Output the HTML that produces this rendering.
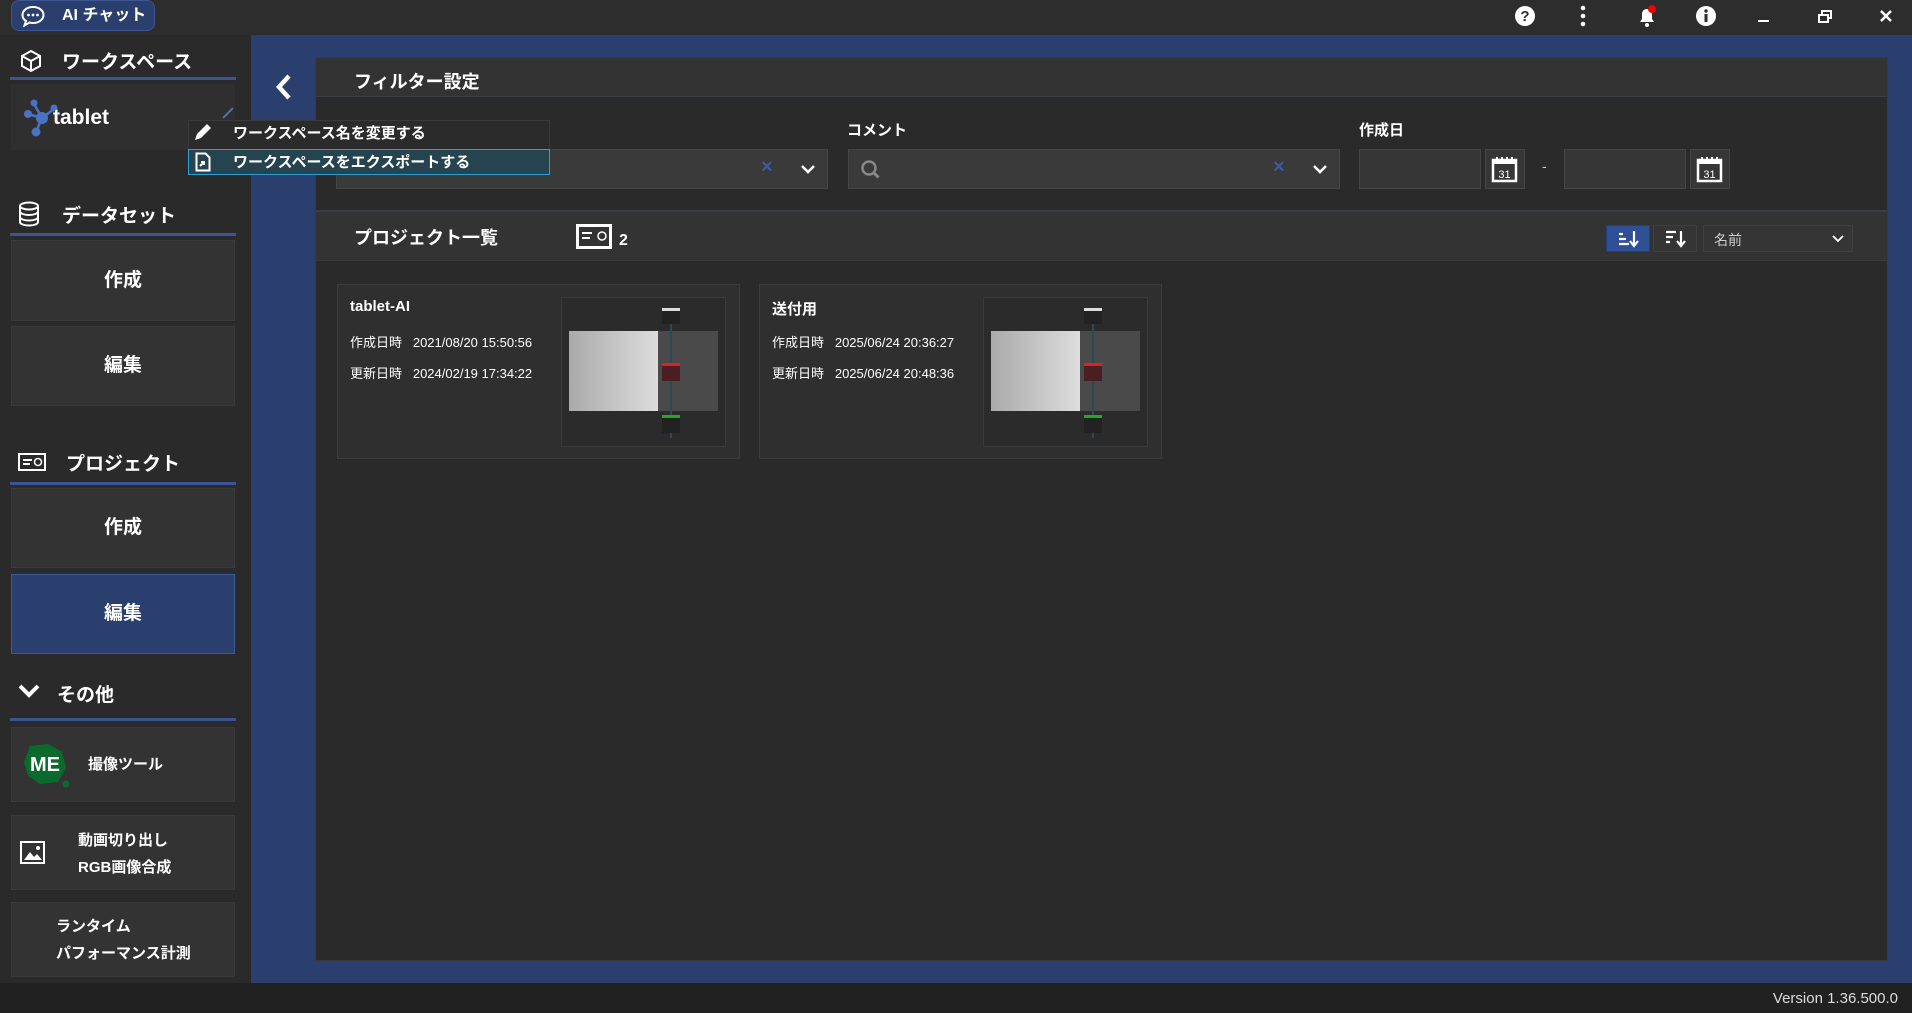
<!DOCTYPE html>
<html><head><meta charset="utf-8"><style>
*{box-sizing:border-box;margin:0;padding:0}
body{width:1912px;height:1013px;background:#2a2a2a;font-family:"Liberation Sans","Noto Sans CJK JP",sans-serif;color:#fff;position:relative;overflow:hidden}
.a{position:absolute}
.top{left:0;top:0;width:1912px;height:35px;background:#2d2d2d}
.chat{left:11px;top:0;width:144px;height:31px;background:#2b3f6e;border:1px solid #3d5590;border-radius:8px;font-size:16px;font-weight:bold;line-height:29px;padding-left:50px}
.side{left:0;top:35px;width:251px;height:948px;background:#2a2a2a}
.blue{left:251px;top:35px;width:1661px;height:948px;background:#2a3f6e}
.bot{left:0;top:983px;width:1912px;height:30px;background:#212121;font-size:15px;color:#ddd}
.hd{font-size:19px;font-weight:bold;left:62px}
.ul{left:10px;width:226px;height:3px;background:#3a5494}
.btn{left:11px;width:224px;background:#333;border:1px solid #3a3a3a;font-size:19px;font-weight:bold;text-align:center}
.panel{left:315px;top:57px;width:1573px;height:904px;background:#2a2a2a;border:1px solid #3a3a3a}
.ph{background:#333;height:39px;border-bottom:1px solid #3a3d4a;font-size:18px;font-weight:bold}
.inp{background:#3a3a3a;border:1px solid #454545}
.lbl{font-size:15px;font-weight:bold}
.card{background:#2f2f2f;border:1px solid #3c3c3c;width:403px;height:175px}
.card .t{left:12px;top:13px;font-size:15px;font-weight:bold}
.card .d{left:12px;font-size:13px}
.thumb{left:223px;top:12px;width:165px;height:150px;border:1px solid #3a3a3a;background:#2b2b2b}
</style></head><body>
<div class="a top"></div>
<div class="a chat"><svg class="a" style="left:8px;top:4px" width="26" height="22" viewBox="0 0 26 22"><path d="M13 2C7 2 2.5 5.5 2.5 10c0 2.5 1.3 4.6 3.5 6l-1.5 4.5 5-3c1.1.3 2.2.5 3.5.5 6 0 10.5-3.5 10.5-8S19 2 13 2z" fill="none" stroke="#fff" stroke-width="2"/><circle cx="8.5" cy="10" r="1.4" fill="#fff"/><circle cx="13" cy="10" r="1.4" fill="#fff"/><circle cx="17.5" cy="10" r="1.4" fill="#fff"/></svg>AI チャット</div>
<svg class="a" style="left:1514px;top:5px" width="22" height="22"><circle cx="11" cy="11" r="10" fill="#fff"/><text x="11" y="16" font-size="15" font-weight="bold" text-anchor="middle" fill="#2d2d2d" font-family="Liberation Sans">?</text></svg>
<svg class="a" style="left:1578px;top:5px" width="10" height="22"><circle cx="5" cy="3" r="2.3" fill="#fff"/><circle cx="5" cy="11" r="2.3" fill="#fff"/><circle cx="5" cy="19" r="2.3" fill="#fff"/></svg>
<svg class="a" style="left:1636px;top:4px" width="24" height="24"><path d="M4 18h14l-2-3V10c0-3-2-5-5-5s-5 2-5 5v5z" fill="#fff"/><circle cx="11" cy="21" r="2" fill="#fff"/><circle cx="16" cy="5" r="4" fill="#e00"/></svg>
<svg class="a" style="left:1695px;top:5px" width="22" height="22"><circle cx="11" cy="11" r="10" fill="#fff"/><rect x="9.5" y="9" width="3" height="8" fill="#2d2d2d"/><circle cx="11" cy="6" r="1.7" fill="#2d2d2d"/></svg>
<div class="a" style="left:1758px;top:20px;width:11px;height:2px;background:#fff"></div>
<svg class="a" style="left:1818px;top:10px" width="14" height="13"><rect x="4" y="1" width="9" height="7" fill="none" stroke="#fff" stroke-width="2"/><rect x="1" y="5" width="9" height="7" fill="#2d2d2d" stroke="#fff" stroke-width="2"/></svg>
<svg class="a" style="left:1879px;top:9px" width="14" height="14"><path d="M2 2l10 10M12 2L2 12" stroke="#fff" stroke-width="2.6"/></svg>

<div class="a side"></div>
<svg class="a" style="left:19px;top:49px" width="24" height="24" viewBox="0 0 24 24"><path d="M12 2l9 5v10l-9 5-9-5V7z M3 7l9 5 9-5 M12 12v10" fill="none" stroke="#fff" stroke-width="2"/></svg>
<div class="a hd" style="top:47px">ワークスペース</div>
<div class="a ul" style="top:77px"></div>
<div class="a" style="left:11px;top:84px;width:224px;height:66px;background:#2f2f2f"></div>
<svg class="a" style="left:22px;top:98px" width="36" height="40"><g stroke="#4a72c4" stroke-width="2.5"><line x1="20" y1="20" x2="6" y2="16"/><line x1="20" y1="20" x2="12" y2="6"/><line x1="20" y1="20" x2="32" y2="11"/><line x1="20" y1="20" x2="14" y2="34"/></g><g fill="#4a72c4"><circle cx="20" cy="20" r="6"/><circle cx="6" cy="16" r="4"/><circle cx="12" cy="5" r="3.5"/><circle cx="32" cy="10" r="3.5"/><circle cx="14" cy="34" r="4.5"/></g></svg>
<div class="a" style="left:53px;top:106px;font-size:21px;font-weight:bold">tablet</div>
<div class="a" style="left:221px;top:112px;width:14px;height:2px;background:#4a72c4;transform:rotate(-45deg)"></div>
<svg class="a" style="left:18px;top:201px" width="22" height="26" viewBox="0 0 22 26"><g fill="none" stroke="#fff" stroke-width="2"><ellipse cx="11" cy="5" rx="9" ry="3.5"/><path d="M2 5v16c0 2 4 3.5 9 3.5s9-1.5 9-3.5V5M2 10.5c0 2 4 3.5 9 3.5s9-1.5 9-3.5M2 16c0 2 4 3.5 9 3.5s9-1.5 9-3.5"/></g></svg>
<div class="a hd" style="top:201px">データセット</div>
<div class="a ul" style="top:233px"></div>
<div class="a btn" style="top:240px;height:81px;line-height:79px">作成</div>
<div class="a btn" style="top:326px;height:80px;line-height:78px">編集</div>
<svg class="a" style="left:18px;top:453px" width="28" height="18"><rect x="1" y="1" width="26" height="16" fill="none" stroke="#fff" stroke-width="2"/><rect x="5" y="6" width="9" height="2" fill="#fff"/><rect x="5" y="10" width="7" height="2" fill="#fff"/><circle cx="20" cy="9" r="3.5" fill="none" stroke="#fff" stroke-width="1.5"/></svg>
<div class="a hd" style="top:449px;left:66px">プロジェクト</div>
<div class="a ul" style="top:482px"></div>
<div class="a btn" style="top:488px;height:80px;line-height:78px">作成</div>
<div class="a btn" style="top:574px;height:80px;line-height:78px;background:#2a3f6e;border-color:#3a5a9a">編集</div>
<svg class="a" style="left:17px;top:683px" width="24" height="18"><path d="M3 3l9 9 9-9" fill="none" stroke="#fff" stroke-width="4"/></svg>
<div class="a hd" style="top:680px;left:57px">その他</div>
<div class="a ul" style="top:718px"></div>
<div class="a btn" style="top:727px;height:75px"></div>
<svg class="a" style="left:20px;top:742px" width="50" height="46"><path d="M10 4l18-2 14 8 4 16-8 14-18 2-12-8-4-14z" fill="#0c6a2c"/><circle cx="46" cy="42" r="3.5" fill="#0c6a2c"/><text x="25" y="29" text-anchor="middle" font-size="20" font-weight="bold" fill="#fff" font-family="Liberation Sans">ME</text></svg>
<div class="a" style="left:88px;top:753px;font-size:15px;font-weight:bold">撮像ツール</div>
<div class="a btn" style="top:815px;height:75px"></div>
<svg class="a" style="left:20px;top:841px" width="26" height="24"><rect x="1" y="1" width="23" height="21" fill="none" stroke="#fff" stroke-width="2"/><path d="M4 19l6-8 4 5 3-3 5 6z" fill="#fff"/><circle cx="18" cy="7" r="2" fill="#fff"/></svg>
<div class="a" style="left:78px;top:827px;font-size:15px;font-weight:bold;line-height:27px">動画切り出し<br>RGB画像合成</div>
<div class="a btn" style="top:902px;height:75px"></div>
<div class="a" style="left:56px;top:913px;font-size:15px;font-weight:bold;line-height:27px">ランタイム<br>パフォーマンス計測</div>

<div class="a blue"></div>
<svg class="a" style="left:273px;top:72px" width="22" height="30"><path d="M16 4L6 15l10 11" fill="none" stroke="#fff" stroke-width="4.5"/></svg>
<div class="a panel">
 <div class="a ph" style="left:0;top:0;width:1571px;padding:10px 0 0 38px">フィルター設定</div>
 <div class="a lbl" style="left:531px;top:61px">コメント</div>
 <div class="a lbl" style="left:1043px;top:61px">作成日</div>
 <div class="a inp" style="left:20px;top:91px;width:492px;height:40px"></div>
 <div class="a" style="left:445px;top:98px;font-size:20px;color:#3a5aa8;font-weight:bold">×</div>
 <svg class="a" style="left:484px;top:106px" width="16" height="12"><path d="M2 2l6 6 6-6" fill="none" stroke="#fff" stroke-width="2.6"/></svg>
 <div class="a inp" style="left:532px;top:91px;width:492px;height:40px"></div>
 <svg class="a" style="left:544px;top:101px" width="22" height="22"><circle cx="9" cy="9" r="6.5" fill="none" stroke="#888" stroke-width="2.5"/><path d="M13.5 13.5l5 5" stroke="#888" stroke-width="3"/></svg>
 <div class="a" style="left:957px;top:98px;font-size:20px;color:#3a5aa8;font-weight:bold">×</div>
 <svg class="a" style="left:996px;top:106px" width="16" height="12"><path d="M2 2l6 6 6-6" fill="none" stroke="#fff" stroke-width="2.6"/></svg>
 <div class="a inp" style="left:1043px;top:91px;width:122px;height:40px;background:#363636"></div>
 <div class="a inp" style="left:1169px;top:91px;width:40px;height:40px;background:#363636"></div>
 <svg class="a" style="left:1175px;top:97px" width="28" height="28"><rect x="2" y="5" width="23" height="21" fill="none" stroke="#fff" stroke-width="2.5"/><rect x="2" y="5" width="23" height="4" fill="#fff"/><path d="M6 2v5M11 2v5M16 2v5M21 2v5" stroke="#fff" stroke-width="2"/><text x="13.5" y="23" text-anchor="middle" font-size="11" fill="#fff" font-family="Liberation Sans">31</text></svg>
 <div class="a" style="left:1226px;top:100px;font-size:14px;color:#ccc">-</div>
 <div class="a inp" style="left:1248px;top:91px;width:122px;height:40px;background:#363636"></div>
 <div class="a inp" style="left:1374px;top:91px;width:40px;height:40px;background:#363636"></div>
 <svg class="a" style="left:1380px;top:97px" width="28" height="28"><rect x="2" y="5" width="23" height="21" fill="none" stroke="#fff" stroke-width="2.5"/><rect x="2" y="5" width="23" height="4" fill="#fff"/><path d="M6 2v5M11 2v5M16 2v5M21 2v5" stroke="#fff" stroke-width="2"/><text x="13.5" y="23" text-anchor="middle" font-size="11" fill="#fff" font-family="Liberation Sans">31</text></svg>
 <div class="a ph" style="left:0;top:152px;width:1571px;height:51px;border-top:2px solid #3a3d4a;padding:12px 0 0 38px;border-bottom:1px solid #3a3a3a">プロジェクト一覧</div>
 <svg class="a" style="left:260px;top:166px" width="36" height="26"><rect x="1.5" y="1.5" width="33" height="22" fill="none" stroke="#fff" stroke-width="3"/><rect x="6" y="8" width="10" height="2" fill="#fff"/><rect x="6" y="13" width="8" height="2" fill="#fff"/><circle cx="26" cy="12" r="4" fill="none" stroke="#fff" stroke-width="1.5"/></svg>
 <div class="a" style="left:303px;top:174px;font-size:16px;font-weight:bold">2</div>
 <div class="a" style="left:1290px;top:167px;width:44px;height:27px;background:#2f4f96;border:1px solid #24407a"></div>
 <svg class="a" style="left:1301px;top:171px" width="24" height="20"><path d="M2 5h4M2 10h7M2 15h10" stroke="#fff" stroke-width="2.2"/><path d="M17 2v14M13 12l4 5 4-5" fill="none" stroke="#fff" stroke-width="2.2"/></svg>
 <div class="a" style="left:1337px;top:167px;width:44px;height:27px;background:#353535;border:1px solid #404040"></div>
 <svg class="a" style="left:1348px;top:171px" width="24" height="20"><path d="M2 3h10M2 8h7M2 13h4" stroke="#fff" stroke-width="2.2"/><path d="M17 2v14M13 12l4 5 4-5" fill="none" stroke="#fff" stroke-width="2.2"/></svg>
 <div class="a" style="left:1387px;top:167px;width:150px;height:27px;background:#353535;border:1px solid #404040;font-size:14px;color:#ccc;padding:4px 0 0 10px">名前</div>
 <svg class="a" style="left:1516px;top:176px" width="12" height="9"><path d="M1 2l5 5 5-5" fill="none" stroke="#fff" stroke-width="1.8"/></svg>
 <div class="a card" style="left:21px;top:226px">
  <div class="a t">tablet-AI</div>
  <div class="a d" style="top:47px">作成日時&nbsp;&nbsp;&nbsp;2021/08/20 15:50:56</div>
  <div class="a d" style="top:78px">更新日時&nbsp;&nbsp;&nbsp;2024/02/19 17:34:22</div>
  <div class="a thumb"><div class="a" style="left:7px;top:33px;width:89px;height:80px;background:linear-gradient(90deg,#aaa,#ddd)"></div><div class="a" style="left:96px;top:33px;width:60px;height:80px;background:#4a4a4a"></div><div class="a" style="left:108px;top:10px;width:2px;height:130px;background:#2a4a5a"></div><div class="a" style="left:100px;top:10px;width:18px;height:16px;background:#222;border-top:3px solid #ddd"></div><div class="a" style="left:100px;top:65px;width:18px;height:18px;background:#4a1e22;border-top:3px solid #d22"></div><div class="a" style="left:100px;top:117px;width:18px;height:18px;background:#222;border-top:3px solid #2a2"></div></div>
 </div>
 <div class="a card" style="left:443px;top:226px">
  <div class="a t">送付用</div>
  <div class="a d" style="top:47px">作成日時&nbsp;&nbsp;&nbsp;2025/06/24 20:36:27</div>
  <div class="a d" style="top:78px">更新日時&nbsp;&nbsp;&nbsp;2025/06/24 20:48:36</div>
  <div class="a thumb"><div class="a" style="left:7px;top:33px;width:89px;height:80px;background:linear-gradient(90deg,#aaa,#ddd)"></div><div class="a" style="left:96px;top:33px;width:60px;height:80px;background:#4a4a4a"></div><div class="a" style="left:108px;top:10px;width:2px;height:130px;background:#2a4a5a"></div><div class="a" style="left:100px;top:10px;width:18px;height:16px;background:#222;border-top:3px solid #ddd"></div><div class="a" style="left:100px;top:65px;width:18px;height:18px;background:#4a1e22;border-top:3px solid #d22"></div><div class="a" style="left:100px;top:117px;width:18px;height:18px;background:#222;border-top:3px solid #2a2"></div></div>
 </div>
</div>
<div class="a" style="left:188px;top:120px;width:362px;height:55px;background:#2b2b2b;border:1px solid #3a3a3a"></div>
<svg class="a" style="left:192px;top:121px" width="22" height="22"><path d="M3 19l2-6L15 3l4 4L9 17z" fill="#fff"/></svg>
<div class="a" style="left:233px;top:122px;font-size:15px;font-weight:bold">ワークスペース名を変更する</div>
<div class="a" style="left:188px;top:149px;width:362px;height:26px;background:#26444f;border:1px solid #2a9fd6"></div>
<svg class="a" style="left:195px;top:152px" width="16" height="20"><path d="M1.5 1.5h9l4 4v13h-13z" fill="none" stroke="#fff" stroke-width="2"/><path d="M5 14l4-4M6 10h3v3" stroke="#fff" stroke-width="2" fill="none"/></svg>
<div class="a" style="left:233px;top:151px;font-size:15px;font-weight:bold">ワークスペースをエクスポートする</div>
<div class="a bot"><span class="a" style="right:14px;top:7px">Version 1.36.500.0</span></div>
</body></html>
